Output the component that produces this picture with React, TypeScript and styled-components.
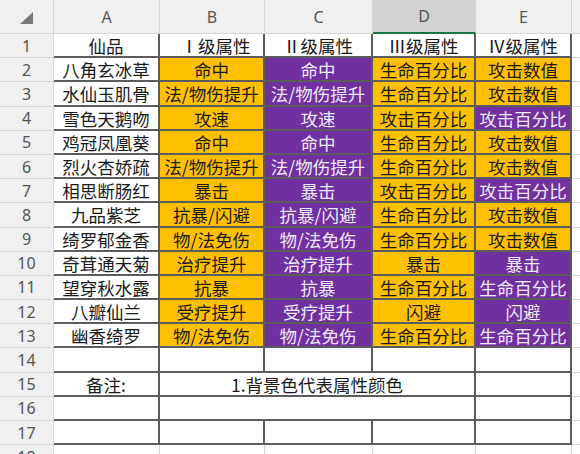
import React from 'react';
import styled, { createGlobalStyle } from 'styled-components';

const GlobalStyle = createGlobalStyle`
  html, body {
    margin: 0;
    padding: 0;
    background: #ffffff;
    overflow: hidden;
  }
  body {
    font-family: "Noto Sans CJK SC", "Noto Sans", sans-serif;
  }
`;

const DARK = '#5c5c5c';
const GRID = '#d6d6d6';

const Sheet = styled.table`
  border-collapse: separate;
  border-spacing: 0;
  table-layout: fixed;
  width: 600px;
  font-family: "Noto Sans CJK SC", "Noto Sans", sans-serif;
`;

const HeadRow = styled.tr`
  height: 34px;
`;

const BodyRow = styled.tr`
  height: 24.2px;
`;

const Corner = styled.th`
  box-sizing: border-box;
  background: #f0f0f0;
  border-right: 1px solid ${GRID};
  border-bottom: 1px solid ${GRID};
  padding: 0;
  position: relative;
`;

const Triangle = styled.svg`
  position: absolute;
  left: 20px;
  top: 12px;
`;

const ColHead = styled.th<{ $selected?: boolean }>`
  box-sizing: border-box;
  background: ${p => (p.$selected ? '#d2d2d2' : '#f0f0f0')};
  border-right: 1px solid ${GRID};
  border-bottom: ${p => (p.$selected ? '2px solid #217346' : `1px solid ${GRID}`)};
  color: #555;
  font-family: "Noto Sans", "DejaVu Sans", sans-serif;
  font-weight: 400;
  font-size: 16px;
  padding: 0;
  text-align: center;
`;

const RowHead = styled.th`
  box-sizing: border-box;
  background: #f0f0f0;
  border-right: 1px solid ${GRID};
  border-bottom: 1px solid ${GRID};
  color: #555;
  font-family: "Noto Sans", "DejaVu Sans", sans-serif;
  font-weight: 400;
  font-size: 16px;
  padding: 0;
  text-align: center;
  vertical-align: middle;
`;

type Fill = 'orange' | 'purple' | undefined;

const Cell = styled.td<{ $fill?: Fill; $plain?: boolean }>`
  box-sizing: border-box;
  background: ${p => (p.$fill === 'orange' ? '#ffc000' : p.$fill === 'purple' ? '#7030a0' : '#ffffff')};
  color: ${p => (p.$fill === 'purple' ? '#f1ebf6' : '#1a1a1a')};
  border-right: ${p => (p.$plain ? `1px solid ${GRID}` : `2px solid ${DARK}`)};
  border-bottom: ${p => (p.$plain ? `1px solid ${GRID}` : `2px solid ${DARK}`)};
  font-size: 17.5px;
  line-height: 20px;
  padding: 2px 0 0;
  text-align: center;
  white-space: nowrap;
  overflow: hidden;
  vertical-align: middle;
`;

const Filler = styled.td`
  box-sizing: border-box;
  border-bottom: 1px solid ${GRID};
  padding: 0;
`;

type Row = {
  name: string;
  b: string;
  c: string;
  d: [string, Fill];
  e: [string, Fill];
};

const rows: Row[] = [
  { name: '八角玄冰草', b: '命中', c: '命中', d: ['生命百分比', 'orange'], e: ['攻击数值', 'orange'] },
  { name: '水仙玉肌骨', b: '法/物伤提升', c: '法/物伤提升', d: ['生命百分比', 'orange'], e: ['攻击数值', 'orange'] },
  { name: '雪色天鹅吻', b: '攻速', c: '攻速', d: ['攻击百分比', 'orange'], e: ['攻击百分比', 'purple'] },
  { name: '鸡冠凤凰葵', b: '命中', c: '命中', d: ['生命百分比', 'orange'], e: ['攻击数值', 'orange'] },
  { name: '烈火杏娇疏', b: '法/物伤提升', c: '法/物伤提升', d: ['生命百分比', 'orange'], e: ['攻击数值', 'orange'] },
  { name: '相思断肠红', b: '暴击', c: '暴击', d: ['攻击百分比', 'orange'], e: ['攻击百分比', 'purple'] },
  { name: '九品紫芝', b: '抗暴/闪避', c: '抗暴/闪避', d: ['生命百分比', 'orange'], e: ['攻击数值', 'orange'] },
  { name: '绮罗郁金香', b: '物/法免伤', c: '物/法免伤', d: ['生命百分比', 'orange'], e: ['攻击数值', 'orange'] },
  { name: '奇茸通天菊', b: '治疗提升', c: '治疗提升', d: ['暴击', 'orange'], e: ['暴击', 'purple'] },
  { name: '望穿秋水露', b: '抗暴', c: '抗暴', d: ['生命百分比', 'orange'], e: ['生命百分比', 'purple'] },
  { name: '八瓣仙兰', b: '受疗提升', c: '受疗提升', d: ['闪避', 'orange'], e: ['闪避', 'purple'] },
  { name: '幽香绮罗', b: '物/法免伤', c: '物/法免伤', d: ['生命百分比', 'orange'], e: ['生命百分比', 'purple'] },
];

const App: React.FC = () => {
  return (
    <>
      <GlobalStyle />
      <Sheet>
        <colgroup>
          <col style={{ width: 54 }} />
          <col style={{ width: 106 }} />
          <col style={{ width: 105 }} />
          <col style={{ width: 108 }} />
          <col style={{ width: 103 }} />
          <col style={{ width: 96 }} />
          <col style={{ width: 28 }} />
        </colgroup>
        <thead>
          <HeadRow>
            <Corner>
              <Triangle width="13" height="12" viewBox="0 0 13 12">
                <polygon points="13,0 13,12 0,12" fill="#7a7a7a" />
              </Triangle>
            </Corner>
            <ColHead>A</ColHead>
            <ColHead>B</ColHead>
            <ColHead>C</ColHead>
            <ColHead $selected>D</ColHead>
            <ColHead>E</ColHead>
            <ColHead />
          </HeadRow>
        </thead>
        <tbody>
          <BodyRow>
            <RowHead>1</RowHead>
            <Cell>仙品</Cell>
            <Cell>&nbsp;&nbsp;Ⅰ级属性</Cell>
            <Cell>Ⅱ级属性</Cell>
            <Cell>Ⅲ级属性</Cell>
            <Cell>Ⅳ级属性</Cell>
            <Filler />
          </BodyRow>
          {rows.map((r, i) => (
            <BodyRow key={r.name + i}>
              <RowHead>{i + 2}</RowHead>
              <Cell>{r.name}</Cell>
              <Cell $fill="orange">{r.b}</Cell>
              <Cell $fill="purple">{r.c}</Cell>
              <Cell $fill={r.d[1]}>{r.d[0]}</Cell>
              <Cell $fill={r.e[1]}>{r.e[0]}</Cell>
              <Filler />
            </BodyRow>
          ))}
          <BodyRow>
            <RowHead>14</RowHead>
            <Cell />
            <Cell />
            <Cell />
            <Cell />
            <Cell />
            <Filler />
          </BodyRow>
          <BodyRow>
            <RowHead>15</RowHead>
            <Cell>备注:</Cell>
            <Cell colSpan={3}>1.背景色代表属性颜色</Cell>
            <Cell />
            <Filler />
          </BodyRow>
          <BodyRow>
            <RowHead>16</RowHead>
            <Cell />
            <Cell colSpan={3} />
            <Cell />
            <Filler />
          </BodyRow>
          <BodyRow>
            <RowHead>17</RowHead>
            <Cell />
            <Cell />
            <Cell />
            <Cell />
            <Cell />
            <Filler />
          </BodyRow>
          <BodyRow>
            <RowHead>18</RowHead>
            <Cell $plain />
            <Cell $plain />
            <Cell $plain />
            <Cell $plain />
            <Cell $plain />
            <Filler />
          </BodyRow>
        </tbody>
      </Sheet>
    </>
  );
};

export default App;
